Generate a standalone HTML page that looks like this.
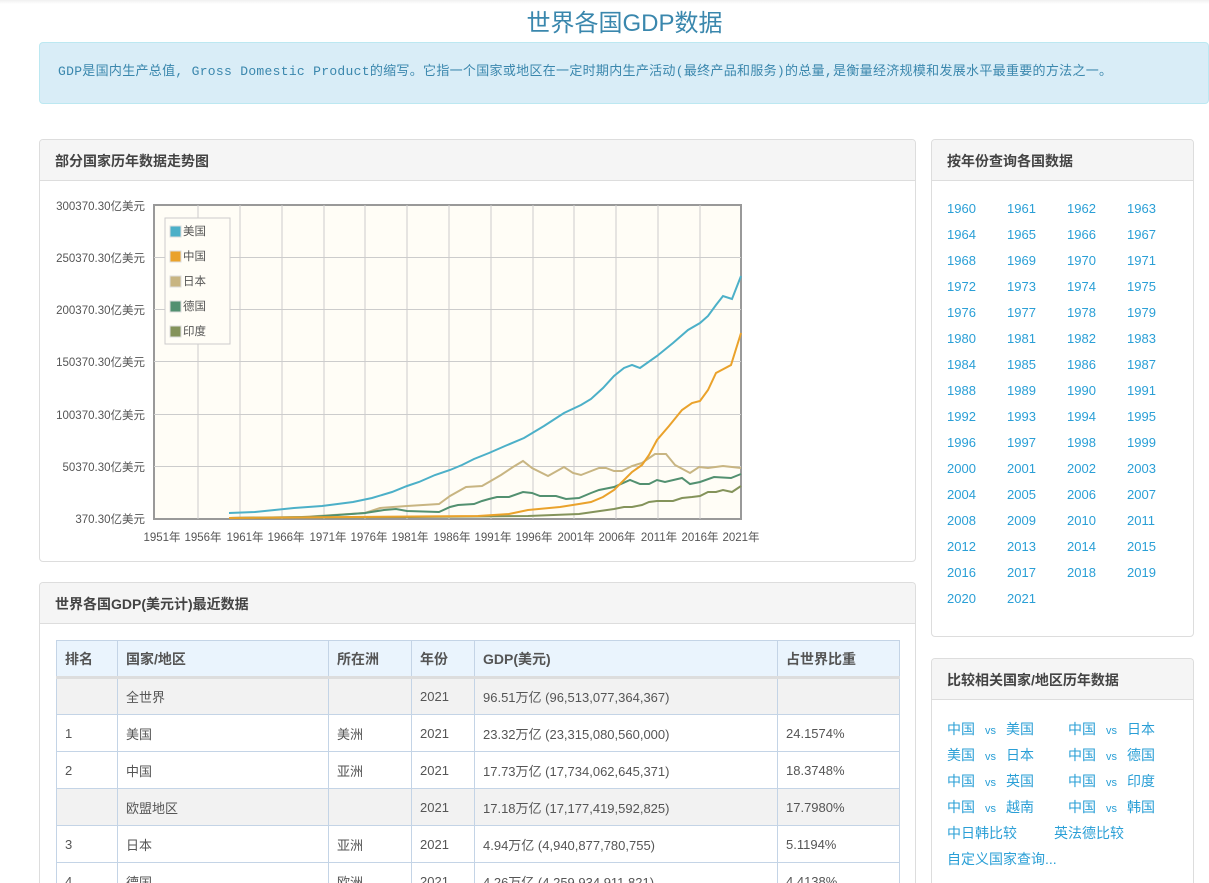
<!DOCTYPE html>
<html style="height:883px;overflow:hidden"><head><meta charset="utf-8"><style>
*{box-sizing:border-box;margin:0;padding:0}
body{width:1209px;height:883px;overflow:hidden;background:#fff;font-family:"Liberation Sans","Noto Sans CJK SC",sans-serif;color:#555;position:relative}
.a{position:absolute}
.topbar{left:0;top:0;width:1209px;height:4px;background:linear-gradient(#f0f0f0,#fff)}
h1{position:absolute;left:0;width:1249px;top:3px;text-align:center;font-size:24px;font-weight:normal;color:#3a87ad}
.alert{left:39px;top:42px;width:1170px;height:62px;background:#d9edf7;border:1px solid #bce8f1;border-radius:4px;color:#3a87ad;font-size:13px;padding:17px 18px;font-family:"Liberation Mono","Noto Sans CJK SC",monospace;letter-spacing:0.3px;white-space:nowrap}
.panel{border:1px solid #ddd;border-radius:4px;background:#fff;overflow:hidden}
.ph{background:#f5f5f5;border-bottom:1px solid #ddd;height:41px;font-weight:bold;font-size:14px;color:#444;padding:11px 15px}
.yr{position:absolute;color:#2a9fd6;font-size:13px}
table{border-collapse:collapse;position:absolute;left:16px;top:57px;font-size:13px;color:#555}
td,th{border:1px solid #c4d4e6;height:37px;padding:0 8px;text-align:left;white-space:nowrap}
th{background:#eaf4fd;font-weight:bold;font-size:14px;border-bottom:3px solid #ddd}
tr.g td{background:#f2f2f2}
.lk{position:absolute;color:#2a9fd6;font-size:14px}
.lk i{font-style:normal;font-size:11px;margin:0 10px}
#wrap{position:absolute;left:0;top:0;width:1209px;height:883px;overflow:hidden}
</style></head><body><div id="wrap">
<div class="a topbar"></div>
<h1>世界各国GDP数据</h1>
<div class="a alert">GDP是国内生产总值, Gross Domestic Product的缩写。它指一个国家或地区在一定时期内生产活动(最终产品和服务)的总量,是衡量经济规模和发展水平最重要的方法之一。</div>

<div class="a panel" style="left:39px;top:139px;width:877px;height:423px">
<div class="ph">部分国家历年数据走势图</div>
</div>
<svg class="a" style="left:0;top:0" width="920" height="560">
<rect x="154" y="205" width="587" height="314" fill="#fffdf6" stroke="#999" stroke-width="2"/>
<g stroke="#ccc" stroke-width="1">
<line x1="154" y1="257.5" x2="741" y2="257.5"/><line x1="154" y1="309.5" x2="741" y2="309.5"/><line x1="154" y1="361.5" x2="741" y2="361.5"/><line x1="154" y1="414.5" x2="741" y2="414.5"/><line x1="154" y1="466.5" x2="741" y2="466.5"/>
<line x1="198" y1="205" x2="198" y2="519"/><line x1="240" y1="205" x2="240" y2="519"/><line x1="282" y1="205" x2="282" y2="519"/><line x1="324" y1="205" x2="324" y2="519"/><line x1="365" y1="205" x2="365" y2="519"/><line x1="407" y1="205" x2="407" y2="519"/><line x1="449" y1="205" x2="449" y2="519"/><line x1="491" y1="205" x2="491" y2="519"/><line x1="533" y1="205" x2="533" y2="519"/><line x1="574" y1="205" x2="574" y2="519"/><line x1="616" y1="205" x2="616" y2="519"/><line x1="658" y1="205" x2="658" y2="519"/><line x1="700" y1="205" x2="700" y2="519"/>
</g>
<g font-size="11.5" fill="#555" text-anchor="end">
<text x="145" y="210">300370.30亿美元</text><text x="145" y="262">250370.30亿美元</text><text x="145" y="314">200370.30亿美元</text><text x="145" y="366">150370.30亿美元</text><text x="145" y="419">100370.30亿美元</text><text x="145" y="471">50370.30亿美元</text><text x="145" y="523">370.30亿美元</text>
</g>
<g font-size="11.5" fill="#555" text-anchor="middle">
<text x="162" y="541">1951年</text><text x="203" y="541">1956年</text><text x="245" y="541">1961年</text><text x="286" y="541">1966年</text><text x="328" y="541">1971年</text><text x="369" y="541">1976年</text><text x="410" y="541">1981年</text><text x="452" y="541">1986年</text><text x="493" y="541">1991年</text><text x="534" y="541">1996年</text><text x="576" y="541">2001年</text><text x="617" y="541">2006年</text><text x="659" y="541">2011年</text><text x="700" y="541">2016年</text><text x="741" y="541">2021年</text>
</g>
<g fill="none" stroke-width="2">
<polyline stroke="#84935a" points="229,518 411,517 528,516 579,514 614,509 624,507 632,507 642,505 649,502 657,501 673,501 682,498 692,497 700,496 708,492 716,492 723,490 732,492 741,486"/>
<polyline stroke="#c8b582" points="229,518 302,517 365,513 380,508 407,506 439,504 450,496 466,487 482,486 489,482 501,475 513,467 523,461 532,468 548,476 564,467 573,473 581,475 599,468 606,468 614,471 622,471 632,466 642,463 655,454 666,454 675,465 690,473 699,467 708,468 723,466 741,468"/>
<polyline stroke="#529070" points="229,518 310,517 365,513 384,510 396,509 407,511 439,512 450,507 458,505 474,504 482,501 489,499 497,497 509,497 523,492 532,493 540,496 556,496 566,499 579,498 591,493 599,490 614,487 630,480 640,484 649,484 657,480 665,482 682,478 690,484 700,482 714,477 731,478 741,474"/>
<polyline stroke="#eaa22b" points="229,518 478,516 509,514 528,510 560,507 579,504 591,502 603,497 614,490 624,480 632,472 642,465 649,455 657,440 669,426 682,410 692,403 700,401 708,390 716,373 731,365 741,333"/>
<polyline stroke="#4cb0c8" points="229,513 255,512 294,508 322,506 353,502 372,498 392,492 407,486 419,482 435,475 450,470 462,465 474,459 489,453 505,446 524,438 544,426 564,413 581,405 591,399 603,388 614,376 624,368 632,365 640,368 657,356 673,343 688,330 700,323 708,316 716,305 723,296 732,299 741,276"/>
</g>
<rect x="165" y="218" width="65" height="126" fill="#fffdf6" stroke="#ccc"/>
<g font-size="11.5" fill="#555">
<rect x="170" y="226" width="11" height="11" fill="#4cb0c8" stroke="#ddd"/><text x="183" y="235">美国</text>
<rect x="170" y="251" width="11" height="11" fill="#eaa22b" stroke="#ddd"/><text x="183" y="260">中国</text>
<rect x="170" y="276" width="11" height="11" fill="#c8b582" stroke="#ddd"/><text x="183" y="285">日本</text>
<rect x="170" y="301" width="11" height="11" fill="#529070" stroke="#ddd"/><text x="183" y="310">德国</text>
<rect x="170" y="326" width="11" height="11" fill="#84935a" stroke="#ddd"/><text x="183" y="335">印度</text>
</g>
</svg>

<div class="a panel" style="left:39px;top:582px;width:877px;height:301px;border-bottom:none;border-radius:4px 4px 0 0">
<div class="ph">世界各国GDP(美元计)最近数据</div>
<table>
<tr><th style="width:61px">排名</th><th style="width:211px">国家/地区</th><th style="width:83px">所在洲</th><th style="width:63px">年份</th><th style="width:303px">GDP(美元)</th><th style="width:122px">占世界比重</th></tr>
<tr class="g"><td></td><td>全世界</td><td></td><td>2021</td><td>96.51万亿 (96,513,077,364,367)</td><td></td></tr>
<tr><td>1</td><td>美国</td><td>美洲</td><td>2021</td><td>23.32万亿 (23,315,080,560,000)</td><td>24.1574%</td></tr>
<tr><td>2</td><td>中国</td><td>亚洲</td><td>2021</td><td>17.73万亿 (17,734,062,645,371)</td><td>18.3748%</td></tr>
<tr class="g"><td></td><td>欧盟地区</td><td></td><td>2021</td><td>17.18万亿 (17,177,419,592,825)</td><td>17.7980%</td></tr>
<tr><td>3</td><td>日本</td><td>亚洲</td><td>2021</td><td>4.94万亿 (4,940,877,780,755)</td><td>5.1194%</td></tr>
<tr><td>4</td><td>德国</td><td>欧洲</td><td>2021</td><td>4.26万亿 (4,259,934,911,821)</td><td>4.4138%</td></tr>
</table>
</div>

<div class="a panel" style="left:931px;top:139px;width:263px;height:498px">
<div class="ph">按年份查询各国数据</div>
</div>
<div id="yrs"></div>
<script>
var h='';for(var i=0;i<62;i++){var y=1960+i;h+='<span class="yr" style="left:'+(947+(i%4)*60)+'px;top:'+(201+Math.floor(i/4)*26)+'px">'+y+'</span>';}
document.getElementById('yrs').innerHTML=h;
</script>

<div class="a panel" style="left:931px;top:658px;width:263px;height:225px;border-bottom:none;border-radius:4px 4px 0 0">
<div class="ph">比较相关国家/地区历年数据</div>
</div>
<span class="lk" style="left:947px;top:719px">中国<i>vs</i>美国</span>
<span class="lk" style="left:1068px;top:719px">中国<i>vs</i>日本</span>
<span class="lk" style="left:947px;top:745px">美国<i>vs</i>日本</span>
<span class="lk" style="left:1068px;top:745px">中国<i>vs</i>德国</span>
<span class="lk" style="left:947px;top:771px">中国<i>vs</i>英国</span>
<span class="lk" style="left:1068px;top:771px">中国<i>vs</i>印度</span>
<span class="lk" style="left:947px;top:797px">中国<i>vs</i>越南</span>
<span class="lk" style="left:1068px;top:797px">中国<i>vs</i>韩国</span>
<span class="lk" style="left:947px;top:823px">中日韩比较</span>
<span class="lk" style="left:1054px;top:823px">英法德比较</span>
<span class="lk" style="left:947px;top:849px">自定义国家查询...</span>
</div></body></html>
